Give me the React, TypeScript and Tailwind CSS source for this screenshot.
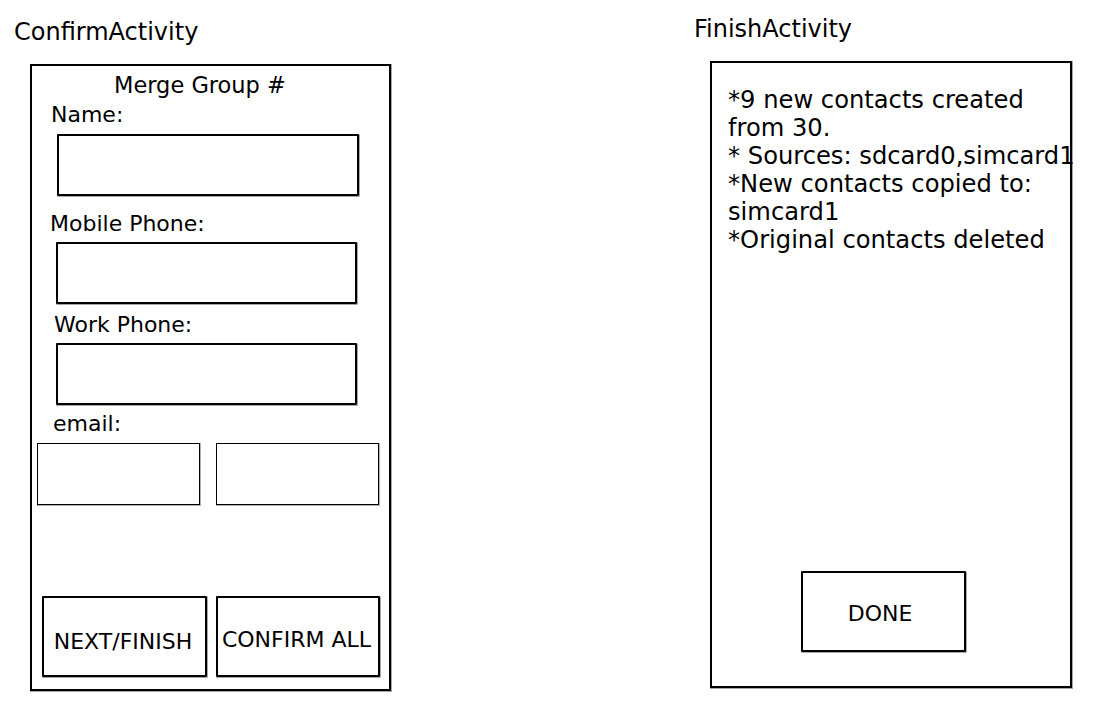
import React from "react";

const font = { fontFamily: '"DejaVu Sans", sans-serif' };

export default function App() {
  return (
    <div
      className="w-[1111px] h-[709px] bg-white text-black flex items-start overflow-hidden"
      style={font}
    >
      {/* Left: ConfirmActivity */}
      <div className="ml-[14px] mt-[18px] flex flex-col shrink-0">
        <div className="text-[24px] leading-[28px] whitespace-nowrap">ConfirmActivity</div>
        <div className="ml-[16px] mt-[18px] w-[361px] h-[627px] border-2 border-black shadow-[0.5px_0.5px_0_0.5px_rgba(0,0,0,0.35)] flex flex-col text-[22px] leading-[25px]">
          <div className="ml-[82px] mt-[6.5px] text-[22.5px] whitespace-nowrap">Merge Group #</div>
          <div className="ml-[19px] mt-[4px] whitespace-nowrap">Name:</div>
          <div className="ml-[25px] mt-[7.5px] w-[302px] h-[62px] border-2 border-black rounded-[1px] shadow-[0.5px_0.5px_0_0.5px_rgba(0,0,0,0.35)]" />
          <div className="ml-[18px] mt-[14.5px] whitespace-nowrap">Mobile Phone:</div>
          <div className="ml-[24px] mt-[6.5px] w-[301px] h-[62px] border-2 border-black rounded-[1px] shadow-[0.5px_0.5px_0_0.5px_rgba(0,0,0,0.35)]" />
          <div className="ml-[22px] mt-[7.5px] whitespace-nowrap">Work Phone:</div>
          <div className="ml-[24px] mt-[6.5px] w-[301px] h-[62px] border-2 border-black rounded-[1px] shadow-[0.5px_0.5px_0_0.5px_rgba(0,0,0,0.35)]" />
          <div className="ml-[21px] mt-[6px] whitespace-nowrap">email:</div>
          <div className="ml-[5px] mt-[7px] flex gap-[16px]">
            <div className="w-[163px] h-[62px] border-[1.5px] border-black shadow-[0.5px_0.5px_0_0.5px_rgba(0,0,0,0.3)]" />
            <div className="w-[163px] h-[62px] border-[1.5px] border-black shadow-[0.5px_0.5px_0_0.5px_rgba(0,0,0,0.3)]" />
          </div>
          <div className="ml-[10px] mt-[91px] flex gap-[9px]">
            <div className="w-[165px] h-[81px] border-2 border-black rounded-[1px] shadow-[0.5px_0.5px_0_0.5px_rgba(0,0,0,0.35)] flex items-center justify-center pt-[9px] pr-[3px] whitespace-nowrap">
              NEXT/FINISH
            </div>
            <div className="w-[164px] h-[81px] border-2 border-black rounded-[1px] shadow-[0.5px_0.5px_0_0.5px_rgba(0,0,0,0.35)] flex items-center justify-center pt-[6px] pr-[3px] whitespace-nowrap">
              CONFIRM ALL
            </div>
          </div>
        </div>
      </div>

      {/* Right: FinishActivity */}
      <div className="ml-[303px] mt-[15px] flex flex-col shrink-0">
        <div className="text-[24px] leading-[28px] whitespace-nowrap">FinishActivity</div>
        <div className="ml-[16px] mt-[18px] w-[362px] h-[627px] border-2 border-black shadow-[0.5px_0.5px_0_0.5px_rgba(0,0,0,0.35)] flex flex-col">
          <div className="ml-[16px] mt-[23px] text-[24.2px] leading-[28px] whitespace-nowrap">
            <div>*9 new contacts created</div>
            <div>from 30.</div>
            <div>* Sources: sdcard0,simcard1</div>
            <div>*New contacts copied to:</div>
            <div>simcard1</div>
            <div>*Original contacts deleted</div>
          </div>
          <div className="ml-[89px] mt-[317px] w-[165px] h-[81px] border-2 border-black rounded-[1px] shadow-[0.5px_0.5px_0_0.5px_rgba(0,0,0,0.35)] flex items-center justify-center pt-[3px] pr-[7px] text-[22px] leading-[25px]">
            DONE
          </div>
        </div>
      </div>
    </div>
  );
}
